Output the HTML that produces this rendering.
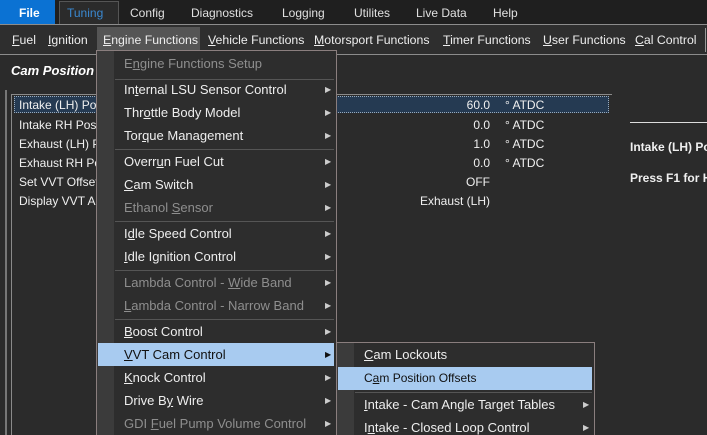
<!DOCTYPE html>
<html><head><style>
*{margin:0;padding:0;box-sizing:border-box}
html,body{width:707px;height:435px;overflow:hidden}
body{background:#2b2b2b;font-family:"Liberation Sans",sans-serif;color:#e8e8e8;position:relative;font-size:12px}
.a{position:absolute;white-space:nowrap}
u{text-decoration:underline}
.top{left:0;top:0;width:707px;height:24px;background:#1f1f1f}
.row2{left:0;top:24px;width:707px;height:31px;background:#2e2e2e;border-top:1px solid #8c8c8c;border-bottom:1px solid #8c8c8c}
.mi{font-size:12px;top:6px;color:#e0e0e0}
.m2{font-size:12.3px;top:33px;color:#eee}
.menu{left:96px;top:50px;width:241px;height:385px;background:#2d2d2d;border:1px solid #8a7e7e;border-bottom:none;overflow:hidden}
.gut{position:absolute;left:0;top:0;width:17px;height:100%;background:#3b3b3b}
.it{position:absolute;left:27px;font-size:13px;color:#eee}
.dis{color:#8e8e8e}
.ar{position:absolute;left:228px;font-size:8px;color:#ccc}
.sep{position:absolute;left:18px;right:2px;height:1px;background:#555}
.hl{position:absolute;background:#a8cbf0}
.lr{font-size:12px;color:#f0f0f0}
</style></head><body>
<div class="a top"></div>
<div class="a" style="left:0;top:0;width:55px;height:24px;background:#0b72d3"></div>
<div class="a mi" style="left:19px;color:#fff;font-weight:bold">File</div>
<div class="a" style="left:59px;top:1px;width:60px;height:24px;background:#2b2b2b;border:1px solid #555;border-bottom:none"></div>
<div class="a mi" style="left:67px;color:#3a88d0">Tuning</div>
<div class="a mi" style="left:130px">Config</div>
<div class="a mi" style="left:191px">Diagnostics</div>
<div class="a mi" style="left:282px">Logging</div>
<div class="a mi" style="left:354px">Utilites</div>
<div class="a mi" style="left:416px">Live Data</div>
<div class="a mi" style="left:493px">Help</div>
<div class="a row2"></div>
<div class="a" style="left:97px;top:27px;width:103px;height:23px;background:#555"></div>
<div class="a m2" style="left:12px"><u>F</u>uel</div>
<div class="a m2" style="left:48px"><u>I</u>gnition</div>
<div class="a m2" style="left:103px"><u>E</u>ngine Functions</div>
<div class="a m2" style="left:208px"><u>V</u>ehicle Functions</div>
<div class="a m2" style="left:314px"><u>M</u>otorsport Functions</div>
<div class="a m2" style="left:443px"><u>T</u>imer Functions</div>
<div class="a m2" style="left:543px"><u>U</u>ser Functions</div>
<div class="a m2" style="left:635px"><u>C</u>al Control</div>
<div class="a" style="left:705px;top:28px;width:1px;height:24px;background:#999"></div>

<div class="a" style="left:11px;top:63px;font-size:13px;font-weight:bold;font-style:italic;color:#fff">Cam Position</div>
<div class="a" style="left:5px;top:90px;width:2px;height:345px;background:#777"></div>
<div class="a" style="left:11px;top:94px;width:601px;height:341px;border-left:1px solid #8a8a8a;border-top:1px solid #8a8a8a"></div>
<div class="a" style="left:14px;top:96px;width:595px;height:17px;background:#253a52;border:1px dotted #9ab"></div>
<div class="a lr" style="left:19px;top:98px">Intake (LH) Position</div>
<div class="a lr" style="left:19px;top:118px">Intake RH Position</div>
<div class="a lr" style="left:19px;top:137px">Exhaust (LH) Position</div>
<div class="a lr" style="left:19px;top:156px">Exhaust RH Position</div>
<div class="a lr" style="left:19px;top:175px">Set VVT Offset</div>
<div class="a lr" style="left:19px;top:194px">Display VVT Angle</div>
<div class="a lr" style="left:390px;width:100px;text-align:right;top:98px">60.0</div>
<div class="a lr" style="left:390px;width:100px;text-align:right;top:118px">0.0</div>
<div class="a lr" style="left:390px;width:100px;text-align:right;top:137px">1.0</div>
<div class="a lr" style="left:390px;width:100px;text-align:right;top:156px">0.0</div>
<div class="a lr" style="left:390px;width:100px;text-align:right;top:175px">OFF</div>
<div class="a lr" style="left:390px;width:100px;text-align:right;top:194px">Exhaust (LH)</div>
<div class="a lr" style="left:505px;top:98px">° ATDC</div>
<div class="a lr" style="left:505px;top:118px">° ATDC</div>
<div class="a lr" style="left:505px;top:137px">° ATDC</div>
<div class="a lr" style="left:505px;top:156px">° ATDC</div>
<div class="a" style="left:630px;top:122px;width:77px;height:1px;background:#ddd"></div>
<div class="a" style="left:630px;top:140px;width:77px;height:50px;overflow:hidden">
<div class="a lr" style="left:0;top:0;font-weight:bold">Intake (LH) Position</div>
<div class="a lr" style="left:0;top:31px;font-weight:bold">Press F1 for Help</div>
</div>

<div class="a menu"><div class="gut"></div>
<div class="it dis" style="top:5px">E<u>n</u>gine Functions Setup</div>
<div class="sep" style="top:28px"></div>
<div class="it" style="top:31px">In<u>t</u>ernal LSU Sensor Control</div><div class="ar" style="top:34px">▶</div>
<div class="it" style="top:54px">Thr<u>o</u>ttle Body Model</div><div class="ar" style="top:57px">▶</div>
<div class="it" style="top:77px">Tor<u>q</u>ue Management</div><div class="ar" style="top:80px">▶</div>
<div class="sep" style="top:98px"></div>
<div class="it" style="top:103px">Overr<u>u</u>n Fuel Cut</div><div class="ar" style="top:106px">▶</div>
<div class="it" style="top:126px"><u>C</u>am Switch</div><div class="ar" style="top:129px">▶</div>
<div class="it dis" style="top:149px">Ethanol <u>S</u>ensor</div><div class="ar" style="top:152px">▶</div>
<div class="sep" style="top:170px"></div>
<div class="it" style="top:175px">I<u>d</u>le Speed Control</div><div class="ar" style="top:178px">▶</div>
<div class="it" style="top:198px"><u>I</u>dle Ignition Control</div><div class="ar" style="top:201px">▶</div>
<div class="sep" style="top:219px"></div>
<div class="it dis" style="top:224px">Lambda Control - <u>W</u>ide Band</div><div class="ar" style="top:227px">▶</div>
<div class="it dis" style="top:247px"><u>L</u>ambda Control - Narrow Band</div><div class="ar" style="top:250px">▶</div>
<div class="sep" style="top:268px"></div>
<div class="it" style="top:273px"><u>B</u>oost Control</div><div class="ar" style="top:276px">▶</div>
<div class="hl" style="left:1px;top:292px;width:236px;height:23px"></div>
<div class="it" style="top:296px;color:#111"><u>V</u>VT Cam Control</div><div class="ar" style="top:299px;color:#111">▶</div>
<div class="it" style="top:319px"><u>K</u>nock Control</div><div class="ar" style="top:322px">▶</div>
<div class="it" style="top:342px">Drive B<u>y</u> Wire</div><div class="ar" style="top:345px">▶</div>
<div class="it dis" style="top:365px">GDI <u>F</u>uel Pump Volume Control</div><div class="ar" style="top:368px">▶</div>
</div>

<div class="a menu" style="left:336px;top:342px;width:259px;height:93px">
<div class="gut"></div>
<div class="it" style="top:4px"><u>C</u>am Lockouts</div>
<div class="hl" style="left:1px;top:24px;width:254px;height:23px"></div>
<div class="it" style="top:28px;color:#111;font-size:12px">C<u>a</u>m Position Offsets</div>
<div class="sep" style="top:49px"></div>
<div class="it" style="top:54px"><u>I</u>ntake - Cam Angle Target Tables</div><div class="ar" style="left:246px;top:57px">▶</div>
<div class="it" style="top:77px">I<u>n</u>take - Closed Loop Control</div><div class="ar" style="left:246px;top:80px">▶</div>
</div>
</body></html>
